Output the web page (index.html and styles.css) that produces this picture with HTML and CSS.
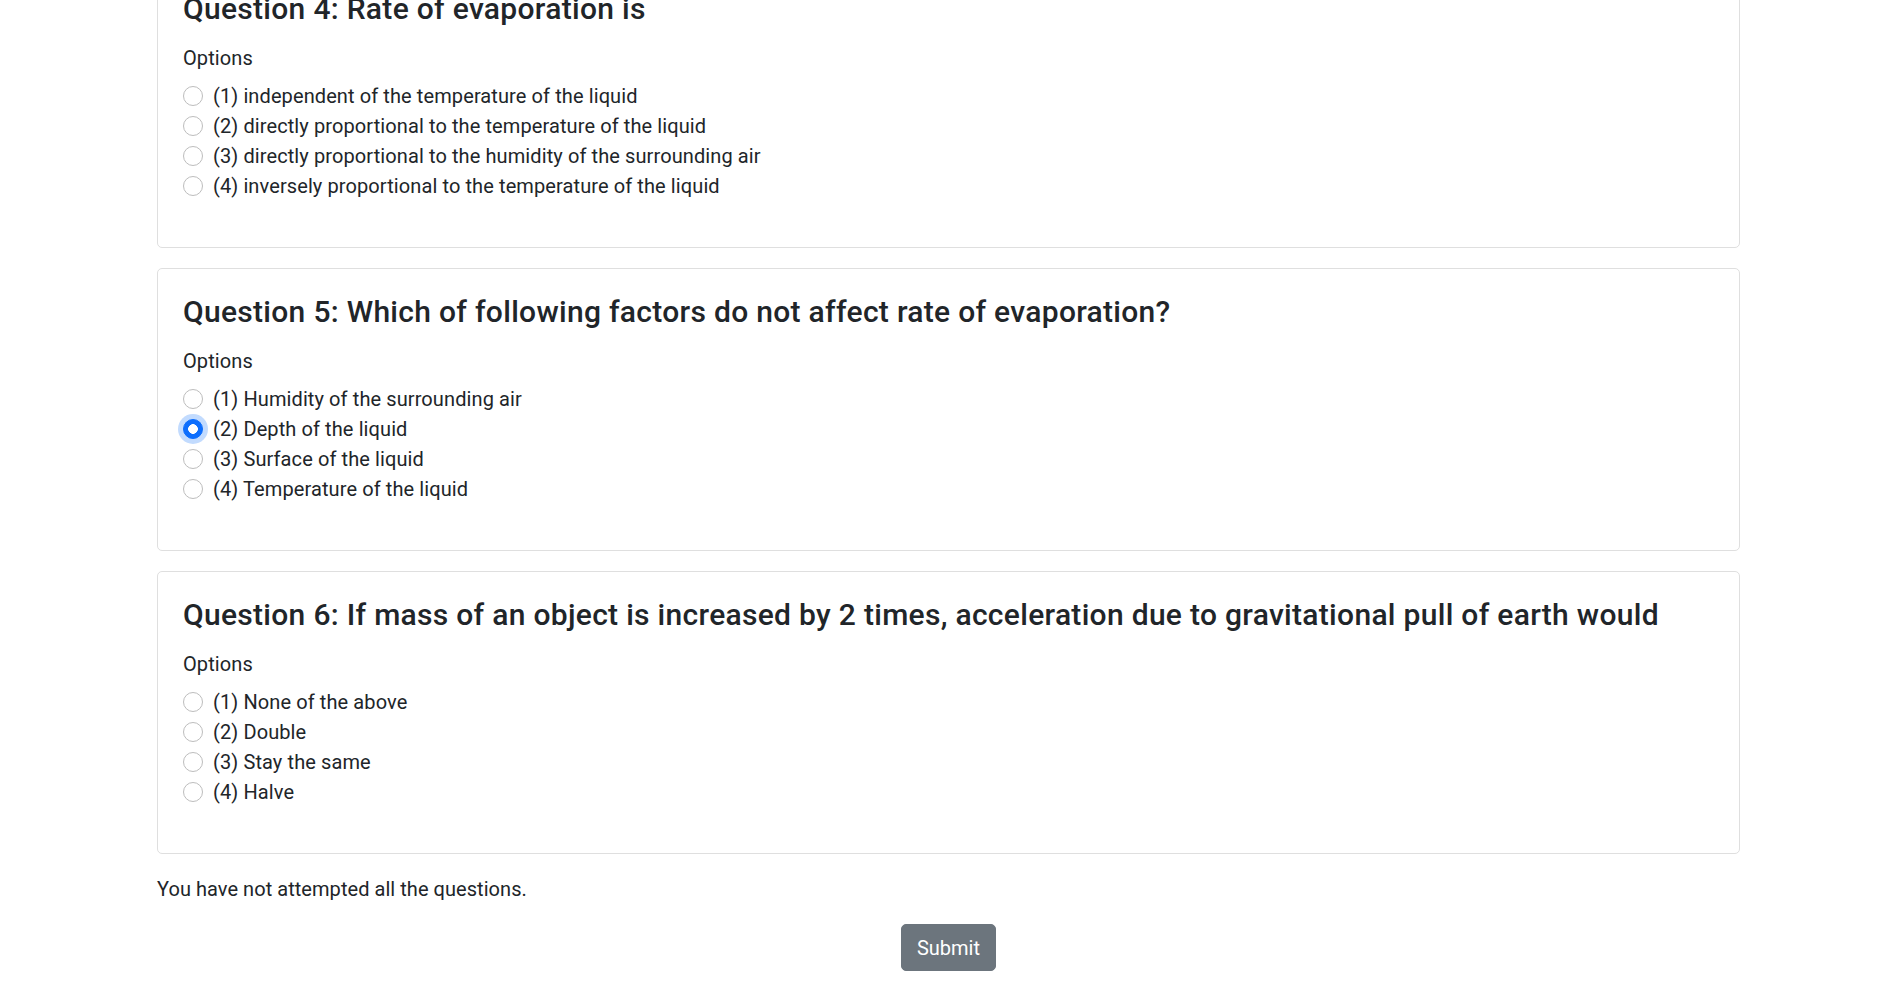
FILE: index.html
```html
<!DOCTYPE html>
<html lang="en">
<head>
<meta charset="utf-8">
<title>Quiz</title>
<link rel="stylesheet" href="styles.css">
</head>
<body>
<main class="quiz">
  <section class="card">
    <h4 class="q-title">Question 4: Rate of evaporation is</h4>
    <div class="opt-label">Options</div>
    <div class="opts">
      <label class="opt"><input type="radio" name="q4"><span>(1) independent of the temperature of the liquid</span></label>
      <label class="opt"><input type="radio" name="q4"><span>(2) directly proportional to the temperature of the liquid</span></label>
      <label class="opt"><input type="radio" name="q4"><span>(3) directly proportional to the humidity of the surrounding air</span></label>
      <label class="opt"><input type="radio" name="q4"><span>(4) inversely proportional to the temperature of the liquid</span></label>
    </div>
  </section>
  <section class="card">
    <h4 class="q-title">Question 5: Which of following factors do not affect rate of evaporation?</h4>
    <div class="opt-label">Options</div>
    <div class="opts">
      <label class="opt"><input type="radio" name="q5"><span>(1) Humidity of the surrounding air</span></label>
      <label class="opt"><input type="radio" name="q5" class="focused" checked><span>(2) Depth of the liquid</span></label>
      <label class="opt"><input type="radio" name="q5"><span>(3) Surface of the liquid</span></label>
      <label class="opt"><input type="radio" name="q5"><span>(4) Temperature of the liquid</span></label>
    </div>
  </section>
  <section class="card">
    <h4 class="q-title">Question 6: If mass of an object is increased by 2 times, acceleration due to gravitational pull of earth would</h4>
    <div class="opt-label">Options</div>
    <div class="opts">
      <label class="opt"><input type="radio" name="q6"><span>(1) None of the above</span></label>
      <label class="opt"><input type="radio" name="q6"><span>(2) Double</span></label>
      <label class="opt"><input type="radio" name="q6"><span>(3) Stay the same</span></label>
      <label class="opt"><input type="radio" name="q6"><span>(4) Halve</span></label>
    </div>
  </section>
  <p class="notice">You have not attempted all the questions.</p>
  <div class="actions">
    <button type="button" class="btn-submit">Submit</button>
  </div>
</main>
</body>
</html>
```
FILE: styles.css
```css
html, body {
  margin: 0;
  padding: 0;
  background: #fff;
}
body {
  font-family: Roboto, "Noto Sans", sans-serif;
  font-size: 20px;
  line-height: 30px;
  color: #212529;
}
.quiz {
  width: 1583px;
  margin: -35px auto 0;
}
.card {
  border: 1px solid #dfdfdf;
  border-radius: 5px;
  padding: 25px;
  margin-bottom: 20px;
}
.q-title {
  margin: 0 0 16px;
  font-size: 30px;
  line-height: 36px;
  font-weight: 500;
  letter-spacing: 0.3px;
}
.opt-label {
  margin-bottom: 8px;
  letter-spacing: 0.1px;
}
.opts {
  display: flex;
  flex-direction: column;
  padding-bottom: 21px;
}
.opt {
  display: flex;
  align-items: flex-start;
  gap: 10px;
  letter-spacing: 0.1px;
}
.opt input {
  appearance: none;
  -webkit-appearance: none;
  width: 20px;
  height: 20px;
  margin: 5px 0 0;
  border: 1px solid #bdbdbd;
  border-radius: 50%;
  background: #fff;
  flex: none;
  box-sizing: border-box;
}
.opt input:checked {
  background: #0d6efd;
  border-color: #0d6efd;
  background-image: radial-gradient(circle, #fff 0 4.6px, transparent 5px);
}
.opt input.focused {
  box-shadow: 0 0 0 5px rgba(13, 110, 253, 0.25);
}
.notice {
  margin: 22px 0 20px;
  letter-spacing: 0.05px;
}
.card + .notice {
  margin-top: 2px;
}
.actions {
  display: flex;
  justify-content: center;
}
.btn-submit {
  font-family: Roboto, "Noto Sans", sans-serif;
  font-size: 20px;
  line-height: 30px;
  padding: 7.5px 15px;
  color: #fff;
  background: #6c757d;
  border: 1px solid #6c757d;
  border-radius: 5px;
}
```
